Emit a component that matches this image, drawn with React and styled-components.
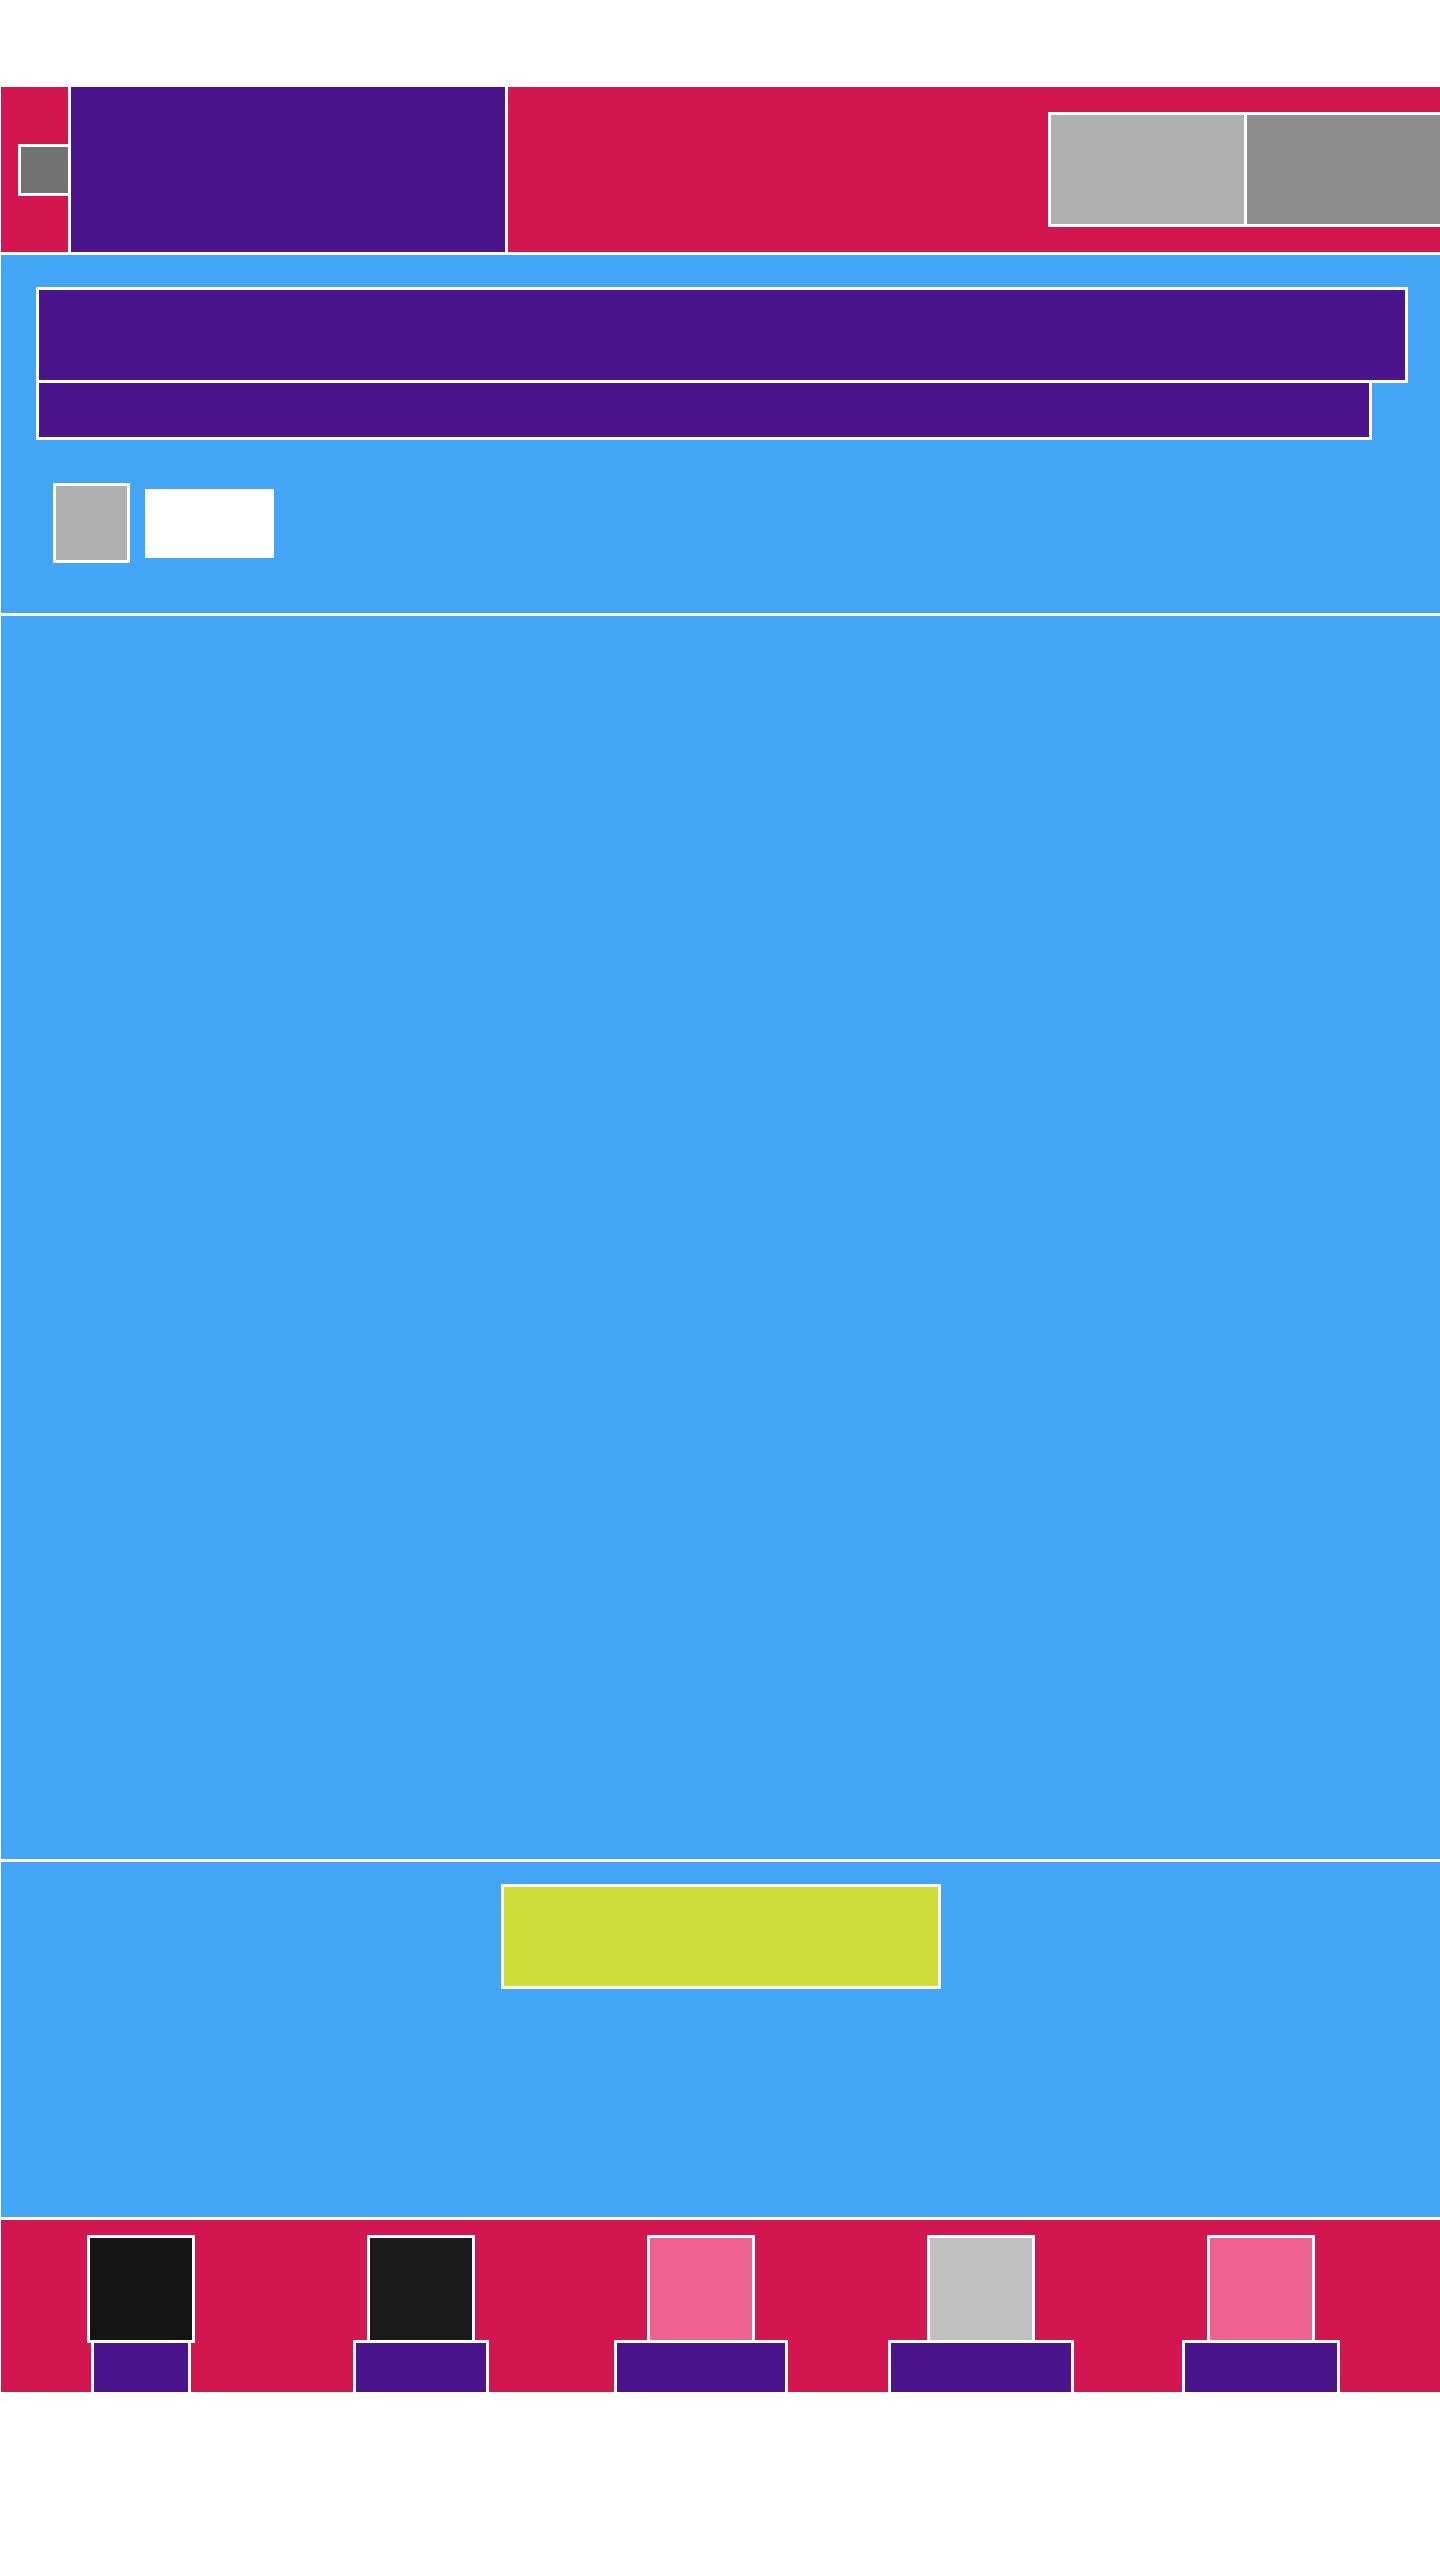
import React from 'react'
import styled, { createGlobalStyle } from 'styled-components'

const RED = '#d3164f'
const PURPLE = '#4a148c'
const BLUE = '#42a5f5'

const GlobalStyle = createGlobalStyle`
  html, body {
    margin: 0;
    padding: 0;
    background: #ffffff;
    overflow-x: hidden;
    font-family: "Liberation Sans", Arial, sans-serif;
  }
  * { box-sizing: border-box; }
`

const Frame = styled.div`
  width: 1440px;
  margin-left: 1px;
  padding-top: 87px;
  display: flex;
  flex-direction: column;
  gap: 3px;
  overflow: hidden;
`

const Header = styled.header`
  height: 165px;
  background: ${RED};
  display: flex;
  align-items: center;
`

const MenuSlot = styled.div`
  width: 67px;
  padding-left: 17px;
  display: flex;
  align-items: center;
`

const MenuButton = styled.div`
  width: 50px;
  height: 52px;
  background: #727272;
  border: 3px solid #fff;
  border-right: none;
`

const Brand = styled.div`
  width: 440px;
  align-self: stretch;
  background: ${PURPLE};
  border-left: 3px solid #fff;
  border-right: 3px solid #fff;
`

const Spacer = styled.div`
  flex: 1;
`

const ButtonGroup = styled.div`
  display: flex;
  gap: 3px;
  background: #fff;
  border: 3px solid #fff;
  margin-right: -2px;
  flex-shrink: 0;
`

const HeaderButton = styled.div`
  width: 193px;
  height: 109px;
  background: ${p => p.$tone};
`

const Section = styled.section`
  background: ${BLUE};
  height: ${p => p.$h}px;
`

const Hero = styled(Section)`
  padding: 32px 0 0 35px;
`

const Title = styled.div`
  width: 1372px;
  height: 96px;
  background: ${PURPLE};
  border: 3px solid #fff;
`

const Subtitle = styled.div`
  width: 1336px;
  height: 60px;
  margin-top: -3px;
  background: ${PURPLE};
  border: 3px solid #fff;
`

const Controls = styled.div`
  display: flex;
  align-items: center;
  gap: 15px;
  margin: 43px 0 0 17px;
`

const Toggle = styled.div`
  width: 77px;
  height: 80px;
  background: #b0b0b0;
  border: 3px solid #fff;
`

const Field = styled.div`
  width: 129px;
  height: 69px;
  background: #fff;
`

const Cta = styled(Section)`
  display: flex;
  justify-content: center;
  padding-top: 22px;
`

const CtaButton = styled.div`
  width: 440px;
  height: 105px;
  background: #cfdd3b;
  border: 3px solid #fff;
`

const Footer = styled.footer`
  height: 172px;
  background: ${RED};
  display: grid;
  grid-template-columns: repeat(5, 280px);
  padding-top: 15px;
  overflow: hidden;
`

const FooterItem = styled.div`
  display: flex;
  flex-direction: column;
  align-items: center;
`

const FooterIcon = styled.div`
  width: 108px;
  height: 108px;
  background: ${p => p.$tone};
  border: 3px solid #fff;
`

const FooterLabel = styled.div`
  width: ${p => p.$w}px;
  height: 80px;
  margin-top: -3px;
  background: ${PURPLE};
  border: 3px solid #fff;
`

const footerItems = [
  { tone: '#141414', w: 100 },
  { tone: '#1a1a1a', w: 136 },
  { tone: '#f06292', w: 174 },
  { tone: '#c0c0c0', w: 186 },
  { tone: '#f06292', w: 158 },
]

export default function App() {
  return (
    <>
      <GlobalStyle />
      <Frame>
        <Header>
          <MenuSlot>
            <MenuButton />
          </MenuSlot>
          <Brand />
          <Spacer />
          <ButtonGroup>
            <HeaderButton $tone="#b0b0b0" />
            <HeaderButton $tone="#8d8d8d" />
          </ButtonGroup>
        </Header>
        <Hero $h={358}>
          <Title />
          <Subtitle />
          <Controls>
            <Toggle />
            <Field />
          </Controls>
        </Hero>
        <Section $h={1243} />
        <Cta $h={355}>
          <CtaButton />
        </Cta>
        <Footer>
          {footerItems.map((item, i) => (
            <FooterItem key={i}>
              <FooterIcon $tone={item.tone} />
              <FooterLabel $w={item.w} />
            </FooterItem>
          ))}
        </Footer>
      </Frame>
    </>
  )
}
